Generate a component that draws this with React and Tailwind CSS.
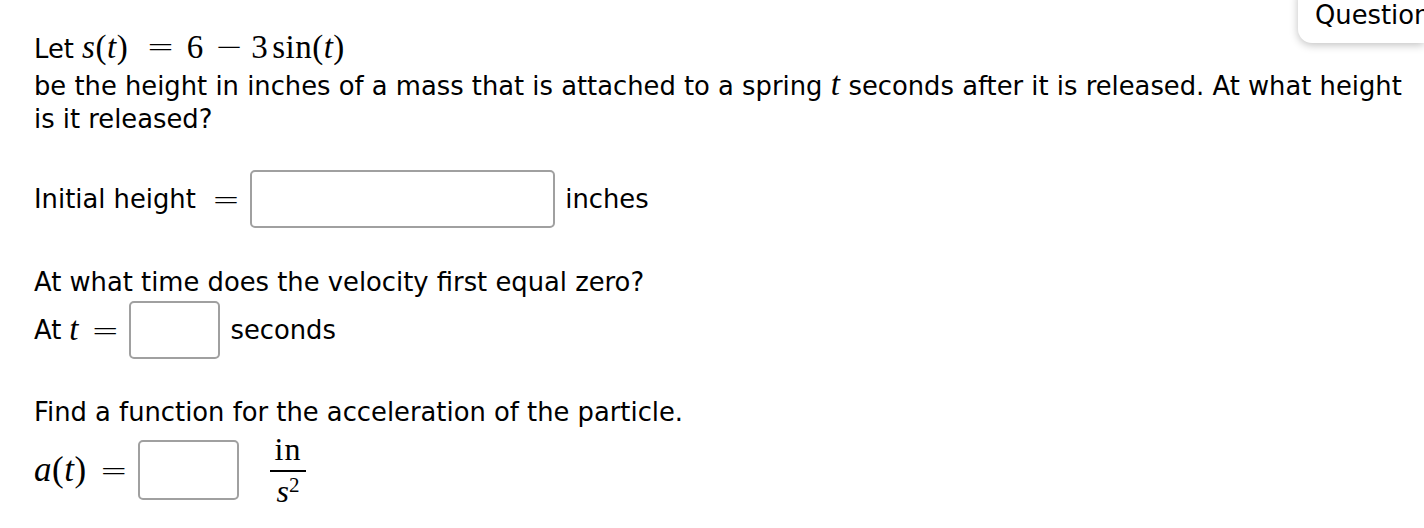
const sans = { fontFamily: '"DejaVu Sans", sans-serif' };

const M = ({ children, className = "" }) => (
  <span className={`font-['Liberation_Serif',serif] text-[33px] tracking-[0.5px] ${className}`}>{children}</span>
);
const V = ({ children }) => <span className="italic">{children}</span>;
const Op = ({ children, className = "mx-[10px]" }) => (
  <span className={`font-['DejaVu_Sans',sans-serif] text-[34px] font-light leading-none ${className}`}>{children}</span>
);

const Box = ({ w }) => (
  <span className={`inline-block h-[58px] ${w} rounded-[5px] border-2 border-[#a0a0a0] bg-white align-middle`} />
);

export default function App() {
  return (
    <div className="relative h-[528px] w-[1424px] overflow-hidden bg-white text-[25.8px] text-black" style={sans}>
      <div className="absolute right-0 -top-2 h-[51px] w-[126px] rounded-bl-[14px] bg-white pl-[17px] pt-[4px] shadow-[0_2px_8px_rgba(0,0,0,0.25)]">
        Question
      </div>

      <div className="pl-[34px] pr-[8px] pt-[28px]">
        <div className="h-[38px] leading-[38px]">
          Let{" "}
          <M>
            <V>s</V>(<V>t</V>)
          </M>
          <Op className="ml-[18px] mr-[12px]">=</Op>
          <M>6</M>
          <Op className="ml-[11px] mr-[8px]">−</Op>
          <M>
            3<span className="ml-[4px]">sin</span>(<V>t</V>)
          </M>
        </div>
        <p className="mt-[2px] leading-[33px]">
          be the height in inches of a mass that is attached to a spring <M className="text-[30px]"><V>t</V></M> seconds after it is released. At what height is it released?
        </p>

        <div className="mt-[34px] flex h-[58px] items-center">
          <span>Initial height</span>
          <Op className="ml-[16px] mr-[10px]">=</Op>
          <Box w="w-[305px]" />
          <span className="ml-[10px]">inches</span>
        </div>

        <div className="mt-[38px] leading-[33px]">At what time does the velocity first equal zero?</div>
        <div className="mt-[2px] flex h-[58px] items-center">
          <span>At</span>
          <M className="ml-[8px]"><V>t</V></M>
          <Op className="ml-[12px] mr-[10px]">=</Op>
          <Box w="w-[91px]" />
          <span className="ml-[10px]">seconds</span>
        </div>

        <div className="mt-[37px] leading-[33px]">Find a function for the acceleration of the particle.</div>
        <div className="flex h-[82px] items-center">
          <M className="text-[35px]">
            <V>a</V>(<V>t</V>)
          </M>
          <Op className="ml-[13px] mr-[10px]">=</Op>
          <Box w="w-[101px] h-[60px]" />
          <span className="ml-[31px] inline-flex flex-col items-center font-['Liberation_Serif',serif] leading-none">
            <span className="pb-[5px] text-[32px] tracking-[1px]">in</span>
            <span className="h-[2px] w-[36px] bg-black" />
            <span className="pt-[3px] text-[32px] italic">
              s<sup className="text-[21px] not-italic">2</sup>
            </span>
          </span>
        </div>
      </div>
    </div>
  );
}
